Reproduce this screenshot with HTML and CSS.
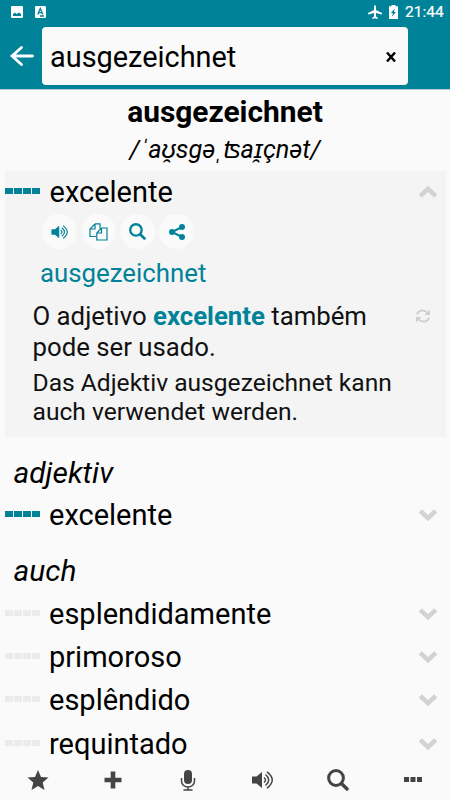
FILE: index.html
```html
<!DOCTYPE html>
<html lang="de">
<head>
<meta charset="utf-8">
<title>ausgezeichnet</title>
<link rel="stylesheet" href="styles.css">
</head>
<body>
<svg width="0" height="0" class="defs">
  <symbol id="speaker" viewBox="0 0 22 18"><path fill="currentColor" d="M0 5.500h4.500L10 1v16l-5.500-4.500H0z"/><path fill="none" stroke="currentColor" stroke-width="1.500" d="M12 6.500q3 2.500 0 5M13.500 3.500q6.500 5.500 0 11M15 .8q10.500 8.200 0 16.400"/></symbol>
  <symbol id="search" viewBox="0 0 22 22"><circle cx="9" cy="9" r="7.400" fill="none" stroke="currentColor" stroke-width="3"/><path d="m14.500 14.500 5.500 5.500" stroke="currentColor" stroke-width="3.400" stroke-linecap="round"/></symbol>
  <symbol id="chevron" viewBox="0 0 20 14"><path d="m2.300 2.800 7.700 7.300 7.700-7.300" fill="none" stroke="currentColor" stroke-width="4.600"/></symbol>
  <symbol id="bars" viewBox="0 0 35 6"><path fill="currentColor" d="M0 0h8v6H0zM9 0h8v6H9zM18 0h8v6h-8zM27 0h8v6h-8z"/></symbol>
</svg>
<header>
  <div class="status">
    <svg width="12" height="12" viewBox="0 0 12 12"><rect width="12" height="12" rx="1.200" fill="#fff"/><path fill="#008299" d="M2 10V8l2-1.500 1.500 1.600L8 6.500 10 8v2z"/></svg>
    <svg class="lang" width="11" height="12" viewBox="0 0 11 12"><rect width="11" height="12" rx="1.200" fill="#fff"/><path d="M2.800 8.500 5.300 2.500l2.500 6M3.700 6.600H7M5 10h4" stroke="#008299" stroke-width="1.300" fill="none"/></svg>
    <span class="space"></span>
    <svg width="14" height="14" viewBox="0 0 14 14"><path fill="#fff" d="M6 1q1-1.500 2 0v4l6 3v1.400L8 7.900v3.500l1.800 1.300V14L7 13.200 4.200 14v-1.300L6 11.400V7.900L0 9.400V8l6-3z"/></svg>
    <svg class="battery" width="9" height="14" viewBox="0 0 9 14"><path fill="#fff" d="M2.500 0h4v1.300H9V14H0V1.300h2.500z"/><path fill="#008299" d="M5.800 3.500 1.900 8h2L3 11.500 7 7H5z"/></svg>
    <span class="time">21:44</span>
  </div>
  <div class="searchbar">
    <svg class="back" width="24" height="20" viewBox="0 0 24 20"><path d="M11.500 1.500 2 10l9.500 8.500M2 10h20.500" fill="none" stroke="#fff" stroke-width="2.800" stroke-linecap="round"/></svg>
    <div class="field"><span>ausgezeichnet</span><svg width="10" height="10" viewBox="0 0 10 10"><path d="m1 .5 8 9M9 .5l-8 9" stroke="#000" stroke-width="2.400"/></svg></div>
  </div>
</header>
<main>
  <h1>ausgezeichnet</h1>
  <div class="ipa">/ˈaʊ̯sgəˌʦaɪ̯çnət/</div>
  <section class="card">
    <div class="row first"><svg class="bars"><use href="#bars"/></svg><span>excelente</span><svg class="chev up"><use href="#chevron"/></svg></div>
    <div class="actions">
      <span><svg width="18" height="14"><use href="#speaker"/></svg></span>
      <span><svg width="19" height="18" viewBox="0 0 19 18"><path d="M6 .8h5v4.700M6 .8 1 6v7.500h6M6 .8V6H1M12.500 5h5.500v12H7.800v-7zM12.500 5v5H7.800" fill="none" stroke="currentColor" stroke-width="1.200"/></svg></span>
      <span><svg width="17" height="17"><use href="#search"/></svg></span>
      <span><svg width="16" height="16" viewBox="0 0 16 16"><path d="M13 3 3 8l10 5" stroke="currentColor" stroke-width="2" fill="none"/><g fill="currentColor"><circle cx="13" cy="3" r="3"/><circle cx="3" cy="8" r="3"/><circle cx="13" cy="13" r="3"/></g></svg></span>
    </div>
    <div class="source">ausgezeichnet</div>
    <div class="example">
      <p class="pt">O adjetivo <b>excelente</b> também<br>pode ser usado.</p>
      <svg width="14" height="14" viewBox="0 0 14 14"><path d="M1 5.500C2.500.5 8.500.2 11.500 4M13 8.500c-1.500 5-7.500 5.300-10.500 1.500" fill="none" stroke="currentColor" stroke-width="2"/><path fill="currentColor" d="M14 .5V6H8.500zM0 13.500V8h5.500z"/></svg>
    </div>
    <p class="de">Das Adjektiv ausgezeichnet kann<br>auch verwendet werden.</p>
  </section>
  <h2>adjektiv</h2>
  <div class="row"><svg class="bars"><use href="#bars"/></svg><span>excelente</span><svg class="chev"><use href="#chevron"/></svg></div>
  <h2 class="also">auch</h2>
  <div class="row"><svg class="bars off"><use href="#bars"/></svg><span>esplendidamente</span><svg class="chev"><use href="#chevron"/></svg></div>
  <div class="row"><svg class="bars off"><use href="#bars"/></svg><span>primoroso</span><svg class="chev"><use href="#chevron"/></svg></div>
  <div class="row"><svg class="bars off"><use href="#bars"/></svg><span>esplêndido</span><svg class="chev"><use href="#chevron"/></svg></div>
  <div class="row"><svg class="bars off"><use href="#bars"/></svg><span>requintado</span><svg class="chev"><use href="#chevron"/></svg></div>
</main>
<nav>
  <span><svg width="22" height="20" viewBox="0 0 22 20"><path fill="currentColor" d="m11 0 3 7 7.500.6-5.800 4.900L17.500 20 11 16l-6.500 4 1.800-7.500L.5 7.600 8 7z"/></svg></span>
  <span><svg width="18" height="18" viewBox="0 0 18 18"><path d="M9 .5v17M.5 9h17" stroke="currentColor" stroke-width="4.600"/></svg></span>
  <span><svg width="16" height="21" viewBox="0 0 16 21"><rect x="4" width="8" height="14" rx="4" fill="currentColor"/><path d="M1.500 8v3a6.500 6 0 0 0 13 0V8M8 17v3M3.500 20h9" fill="none" stroke="currentColor" stroke-width="1.500"/></svg></span>
  <span><svg width="22" height="18"><use href="#speaker"/></svg></span>
  <span><svg width="22" height="22"><use href="#search"/></svg></span>
  <span class="more"><svg width="18" height="5" viewBox="0 0 18 5"><path fill="currentColor" d="M0 0h5v5H0zM6.500 0h5v5h-5zM13 0h5v5h-5z"/></svg></span>
</nav>
</body>
</html>
```

FILE: styles.css
```css
* { box-sizing: border-box; }
body { margin: 0; width: 450px; height: 800px; overflow: hidden; background: #fafafa; color: #000; font-family: Roboto, sans-serif; font-size: 29px; display: flex; flex-direction: column; }
svg { display: block; flex: none; }
.defs { position: absolute; }
header { height: 90px; flex: none; background: #008299; border-bottom: 1px solid #b5cbd1; color: #fff; }
.status { height: 27px; padding: 0 7px 4px 11px; display: flex; align-items: center; }
.lang { margin-left: 12px; }
.space { flex: 1; }
.battery { margin: 0 7px; }
.time { font-size: 15.5px; font-weight: 400; line-height: 20px; width: 38px; white-space: nowrap; -webkit-text-stroke: .2px #fff; }
.searchbar { display: flex; align-items: center; padding-left: 10px; }
.field { margin-left: 8px; width: 366px; height: 58px; background: #fafafa; border-radius: 4px; color: #000; display: flex; align-items: center; justify-content: space-between; padding: 2px 12px 0 8px; }
.field span { font-size: 28.9px; }
main { height: 670px; flex: none; overflow: hidden; }
h1 { margin: 0; padding-top: 4px; font-size: 29.9px; line-height: 36px; text-align: center; }
.ipa { height: 41px; line-height: 39px; font-size: 25.3px; font-style: italic; text-align: center; }
.card { background: #f4f4f4; margin: 0 4px 0 5px; height: 266px; }
.row { height: 43.4px; display: flex; align-items: center; padding: 0 12px 0 4.5px; line-height: 34px; }
.row.first { height: 41px; padding: 0 8px 0 0; }
.row span { flex: 1; margin-left: 9.5px; }
.bars { width: 35px; height: 6px; color: #008299; margin-bottom: 2px; }
.off { color: #ebebeb; }
.chev { width: 20px; height: 14px; color: #d3d3d3; }
.up { transform: rotate(180deg); }
.actions { display: flex; gap: 4px; padding: 3px 0 0 37px; color: #008299; }
.actions span { width: 35px; height: 35px; margin-top: -1px; border-radius: 50%; background: #fafafa; display: flex; align-items: center; justify-content: center; }
.source { color: #008299; font-size: 25.8px; line-height: 32px; margin: 8px 0 0 35px; }
.example { display: flex; justify-content: space-between; align-items: flex-start; padding: 12px 16px 0 27.5px; color: #cfcfcf; }
.example svg { margin-top: 8px; }
p { margin: 0; white-space: nowrap; color: #111; }
.pt { font-size: 25.75px; line-height: 31px; }
.pt b { color: #008299; }
.de { font-size: 24.6px; line-height: 29px; margin: 5px 0 0 27.5px; }
h2 { margin: 14.5px 0 0 13.5px; font-size: 29.9px; line-height: 42px; font-weight: 400; font-style: italic; }
.also { margin-top: 13px; }
nav { height: 40px; display: grid; grid-template-columns: repeat(6, 1fr); color: #444; }
nav span { display: flex; align-items: center; justify-content: center; }
.more { padding-bottom: 2px; }
```
